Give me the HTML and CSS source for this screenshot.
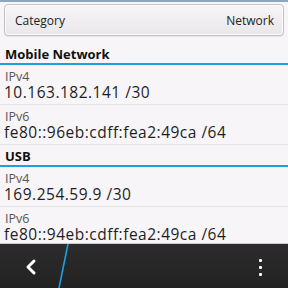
FILE: index.html
```html
<!DOCTYPE html>
<html lang="en">
<head>
  <meta charset="UTF-8" />
  <title>Network</title>
  <link rel="stylesheet" href="styles.css">
</head>
<body>

<div class="topline"></div>

<!-- CATEGORY DROPDOWN -->
<div class="dropdown">
  <span>Category</span>
  <span>Network</span>
</div>

<!-- MOBILE NETWORK -->
<div class="header first">Mobile Network</div>
<div class="row">
  <div class="label">IPv4</div>
  <div class="value">10.163.182.141 /30</div>
</div>
<div class="row">
  <div class="label">IPv6</div>
  <div class="value">fe80::96eb:cdff:fea2:49ca /64</div>
</div>

<!-- USB -->
<div class="header">USB</div>
<div class="row">
  <div class="label">IPv4</div>
  <div class="value">169.254.59.9 /30</div>
</div>
<div class="row">
  <div class="label">IPv6</div>
  <div class="value">fe80::94eb:cdff:fea2:49ca /64</div>
</div>

<!-- ACTION BAR -->
<div class="actionbar">
  <div class="back">
    <svg width="14" height="18" viewBox="0 0 14 18"><path d="M10 3 L4 9 L10 15" fill="none" stroke="#fff" stroke-width="3" stroke-linecap="round" stroke-linejoin="round"/></svg>
  </div>
  <svg class="slash" width="12" height="44" viewBox="0 0 12 44"><path d="M10 0 L1 44" stroke="#1ba1e2" stroke-width="1.6"/></svg>
  <div class="spacer"></div>
  <div class="menu">
    <span></span><span></span><span></span>
  </div>
</div>

</body>
</html>
```

FILE: styles.css
```css
* { box-sizing: border-box; }
body, html {
  margin: 0; padding: 0;
  font-family: 'Open Sans', sans-serif;
  background-color: #f8f5f8;
  color: #1e1e1e;
  width: 288px; height: 288px;
  overflow: hidden;
}
.topline { height: 2px; background: #8ca7bb; }
.dropdown {
  margin: 2px 4px 0 4px; height: 32px;
  display: flex; justify-content: space-between; align-items: center;
  padding: 1px 9px 0 10px;
  border: 1px solid #c4c2c4; border-radius: 4px;
  background: linear-gradient(#f7f5f7, #e9e7e9);
  box-shadow: inset 0 0 0 1px #fbfafb, 0 1px 1px rgba(0,0,0,0.08);
  font-size: 12px; color: #222;
}
.header {
  height: 22px;
  padding: 3px 0 0 5px;
  font-size: 13px; line-height: 16px; font-weight: 700; color: #111;
  border-bottom: 2px solid #1ba1e2;
}
.header.first { margin-top: 7px; }
.row {
  height: 40px; padding: 5px 0 0 4px;
  border-bottom: 1px solid #e6e2e6;
}
.label { font-size: 12.5px; line-height: 14px; color: #555; padding-left: 1px; }
.value { font-size: 15.5px; line-height: 17px; letter-spacing: 0.5px; color: #1e1e1e; }
.actionbar {
  position: fixed; left: 0; right: 0; bottom: 0; height: 45px;
  display: flex; align-items: center;
  padding-top: 2px;
  background: linear-gradient(#2c2c2c, #222);
  border-top: 1px solid #cfcbcf;
}
.back { width: 58px; display: flex; justify-content: center; padding-left: 3px; }
.slash { align-self: flex-start; margin-top: -2px; }
.spacer { flex: 1; }
.menu {
  width: 56px; display: flex; flex-direction: column; align-items: center; gap: 4px;
}
.menu span { width: 3px; height: 3px; background: #fff; border-radius: 1px; }
```
